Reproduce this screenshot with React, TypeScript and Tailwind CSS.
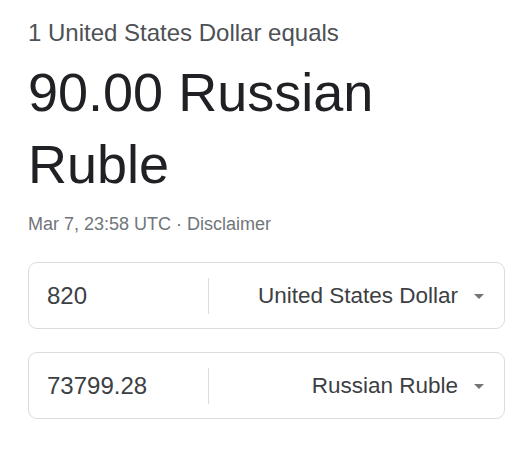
import React from 'react';

const rows = [
    { amount: '820', currency: 'United States Dollar' },
    { amount: '73799.28', currency: 'Russian Ruble' },
];

function ConverterRow({ amount, currency }: { amount: string; currency: string }) {
    return (
        <div className="flex items-center h-[67px] border border-[#dadce0] rounded-[9px]">
            <div className="w-[179px] pl-[18px] text-[24px] leading-[24px] text-[#3c4043]">{amount}</div>
            <div className="w-px h-[36px] bg-[#dadce0]" />
            <div className="flex-1 flex items-center justify-end gap-[16px] pr-[20px]">
                <span className="text-[22.5px] leading-[24px] text-[#3c4043]">{currency}</span>
                <svg width="10" height="5" viewBox="0 0 10 5" className="mt-[1px]">
                    <path d="M0 0 L10 0 L5 5 Z" fill="#757575" />
                </svg>
            </div>
        </div>
    );
}

export default function App() {
    return (
        <div
            className="min-h-screen bg-white pl-[28px] pr-[11px] pt-[15px]"
            style={{ fontFamily: '"Liberation Sans", Arial, sans-serif' }}
        >
            <div className="text-[24px] leading-[36px] text-[#4d5156]">1 United States Dollar equals</div>
            <div className="mt-[5px] text-[54px] leading-[72px] text-[#202124]">90.00 Russian Ruble</div>
            <div className="mt-[11px] text-[18px] leading-[27px] text-[#70757a]">
                Mar 7, 23:58 UTC · Disclaimer
            </div>

            <div className="mt-[24px] flex flex-col gap-[23px]">
                {rows.map((r) => (
                    <ConverterRow key={r.currency} amount={r.amount} currency={r.currency} />
                ))}
            </div>
        </div>
    );
}
